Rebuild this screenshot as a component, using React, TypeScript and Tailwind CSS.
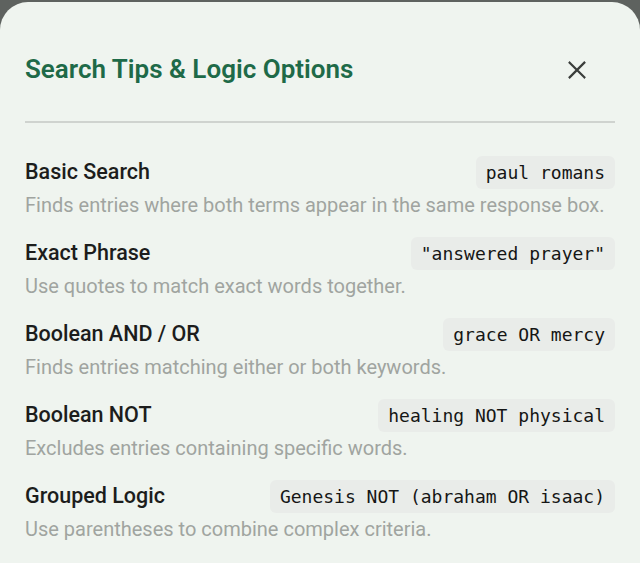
import React from 'react';

type Tip = {
  label: string;
  example: string;
  hint: string;
};

const tips: Tip[] = [
  {
    label: 'Basic Search',
    example: 'paul romans',
    hint: 'Finds entries where both terms appear in the same response box.',
  },
  {
    label: 'Exact Phrase',
    example: '"answered prayer"',
    hint: 'Use quotes to match exact words together.',
  },
  {
    label: 'Boolean AND / OR',
    example: 'grace OR mercy',
    hint: 'Finds entries matching either or both keywords.',
  },
  {
    label: 'Boolean NOT',
    example: 'healing NOT physical',
    hint: 'Excludes entries containing specific words.',
  },
  {
    label: 'Grouped Logic',
    example: 'Genesis NOT (abraham OR isaac)',
    hint: 'Use parentheses to combine complex criteria.',
  },
];

const CloseIcon: React.FC = () => (
  <svg width="22" height="22" viewBox="0 0 24 24" fill="none" stroke="#3a3d3b" strokeWidth="2.4" strokeLinecap="square">
    <path d="M4 4 L20 20 M20 4 L4 20" />
  </svg>
);

export default function App() {
  return (
    <div className="h-[563px] w-[640px] overflow-hidden bg-[#5e625f] pt-[2px] font-['Roboto',sans-serif]">
      <div className="h-full rounded-t-[28px] bg-[#eff4ef] px-[25px]">
        <header className="flex h-[119px] items-center justify-between pt-[16px]">
          <h2 className="text-[26px] font-semibold text-[#1e6a48]">Search Tips &amp; Logic Options</h2>
          <button aria-label="Close" className="mr-[22px] flex h-8 w-8 items-center justify-center">
            <CloseIcon />
          </button>
        </header>
        <div className="h-[2px] bg-[#cfd3cf]" />
        <ul className="pt-[33px]">
          {tips.map((tip) => (
            <li key={tip.label} className="mb-[20px]">
              <div className="flex h-[33px] items-center justify-between">
                <span className="text-[21.5px] font-medium text-[#1c1d1c]">{tip.label}</span>
                <code className="rounded-[6px] bg-[#e9ece9] px-[10px] py-[5px] font-['DejaVu_Sans_Mono',monospace] text-[18px] leading-[23px] text-[#151615]">
                  {tip.example}
                </code>
              </div>
              <p className="mt-[4px] text-[20px] leading-[24px] text-[#a0a4a0]">{tip.hint}</p>
            </li>
          ))}
        </ul>
      </div>
    </div>
  );
}
